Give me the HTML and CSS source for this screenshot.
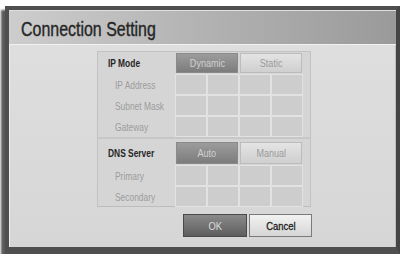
FILE: index.html
```html
<!DOCTYPE html>
<html>
<head>
<meta charset="utf-8">
<link rel="stylesheet" href="styles.css">
</head>
<body>
<div class="screen">
  <div class="header"><h1 class="title"><span class="t">Connection Setting</span></h1></div>
  <div class="panel">
    <div class="table">
      <div class="section">
        <div class="label main"><span class="t">IP Mode</span></div>
        <div class="btn dark span2"><span class="t">Dynamic</span></div>
        <div class="btn light span2"><span class="t">Static</span></div>
        <div class="label sub"><span class="t">IP Address</span></div>
        <div class="cell"></div><div class="cell"></div><div class="cell"></div><div class="cell"></div>
        <div class="label sub"><span class="t">Subnet Mask</span></div>
        <div class="cell"></div><div class="cell"></div><div class="cell"></div><div class="cell"></div>
        <div class="label sub"><span class="t">Gateway</span></div>
        <div class="cell"></div><div class="cell"></div><div class="cell"></div><div class="cell"></div>
      </div>
      <div class="section second">
        <div class="label main"><span class="t">DNS Server</span></div>
        <div class="btn dark span2"><span class="t">Auto</span></div>
        <div class="btn light span2"><span class="t">Manual</span></div>
        <div class="label sub"><span class="t">Primary</span></div>
        <div class="cell"></div><div class="cell"></div><div class="cell"></div><div class="cell"></div>
        <div class="label sub"><span class="t">Secondary</span></div>
        <div class="cell"></div><div class="cell"></div><div class="cell"></div><div class="cell"></div>
      </div>
    </div>
    <div class="actions">
      <div class="action ok"><span class="t">OK</span></div>
      <div class="action cancel"><span class="t">Cancel</span></div>
    </div>
  </div>
</div>
</body>
</html>
```

FILE: styles.css
```css
* { box-sizing: border-box; }
html, body { margin: 0; padding: 0; }
body {
  background: #ffffff;
  width: 406px;
  height: 254px;
  overflow: hidden;
  font-family: "Liberation Sans", Arial, sans-serif;
}
.t {
  display: inline-block;
  white-space: nowrap;
  transform: scaleX(0.82);
}
.screen {
  margin: 6px 0 0 5px;
  width: 395px;
  height: 248px;
  border: 4px solid #4f4f4f;
  border-bottom-width: 7px;
  border-right-color: #454545;
  display: flex;
  flex-direction: column;
  background: #d9d9d9;
  box-shadow: -4px 4px 2px #5a5a5a;
}
.header {
  height: 35px;
  flex: none;
  background: linear-gradient(to right, #cdcdcd 0%, #b5b5b5 45%, #9a9a9a 100%);
  border-bottom: 1px solid #f2f2f2;
  border-top: 1px solid #e0e0e0;
  display: flex;
  align-items: center;
  padding-left: 12px;
}
.title {
  margin: 0;
  font-size: 21px;
  font-weight: normal;
  color: #262626;
  padding-top: 3px;
  -webkit-text-stroke: 0.4px #262626;
}
.title .t {
  transform: scaleX(0.76);
  transform-origin: left center;
}
.panel {
  flex: 1;
  background: linear-gradient(to bottom, #dedede, #d6d6d6);
  border-left: 1px solid #eeeeee;
  border-right: 1px solid #bdbdbd;
  padding: 6px 0 0 87px;
  display: flex;
  flex-direction: column;
}
.table {
  width: 214px;
  border: 1px solid #c2c2c2;
  border-bottom-color: #bdbdbd;
  background: #d5d5d5;
}
.section {
  display: grid;
  grid-template-columns: 76px 30px 30px 30px 30px;
  grid-template-rows: 20px 19px 19px 19px;
  column-gap: 2px;
  row-gap: 2px;
  padding: 1px 0 1px 0;
}
.section.second {
  grid-template-rows: 22px 19px 19px;
  border-top: 2px solid #c7c7c7;
  padding-top: 3px;
  padding-bottom: 0;
}
.label {
  display: flex;
  align-items: center;
  font-size: 10.5px;
  white-space: nowrap;
}
.label .t {
  transform: scaleX(0.8);
  transform-origin: left center;
}
.label.main {
  padding-left: 10px;
  font-weight: bold;
  color: #262626;
}
.label.sub {
  padding-left: 17px;
  color: #9c9c9c;
}
.cell {
  background: #cdcdcd;
  box-shadow: 0 0 0 1px #e2e2e2;
}
.span2 { grid-column: span 2; }
.btn {
  display: flex;
  align-items: center;
  justify-content: center;
  font-size: 10.5px;
}
.btn .t { transform: scaleX(0.86); }
.btn.dark {
  background: linear-gradient(to bottom, #9c9c9c, #7c7c7c);
  color: #d0d0d0;
  border: 1px solid #8a8a8a;
}
.btn.light {
  background: linear-gradient(to bottom, #e4e4e4, #cfcfcf);
  color: #9a9a9a;
  border: 1px solid #bcbcbc;
}
.actions {
  width: 215px;
  display: flex;
  justify-content: flex-end;
  gap: 2px;
  margin-top: 7px;
}
.action {
  height: 23px;
  display: flex;
  align-items: center;
  justify-content: center;
  font-size: 11.5px;
}
.action .t { transform: scaleX(0.82); }
.action.ok {
  width: 64px;
  background: linear-gradient(to bottom, #8a8a8a, #5e5e5e);
  color: #dcdcdc;
  border: 1px solid #4a4a4a;
}
.action.cancel {
  width: 63px;
  background: linear-gradient(to bottom, #f2f2f2, #d6d6d6);
  color: #1a1a1a;
  border: 1px solid #7a7a7a;
  -webkit-text-stroke: 0.3px #1a1a1a;
}
```
